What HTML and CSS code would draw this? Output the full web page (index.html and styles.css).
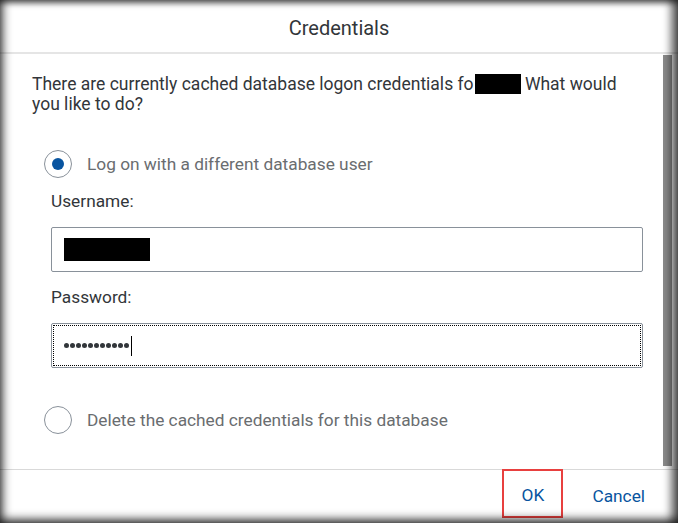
FILE: index.html
```html
<!DOCTYPE html>
<html>
<head>
<meta charset="utf-8">
<link rel="stylesheet" href="styles.css">
</head>
<body>
<div class="frame">
  <div class="header">Credentials</div>
  <div class="main">
    <div class="content">
      <p class="intro">There are currently cached database logon credentials fo<span class="redact-inline"></span> What would you like to do?</p>
      <div class="radio-row">
        <span class="radio checked"><span class="dot"></span></span>
        <span class="radio-label">Log on with a different database user</span>
      </div>
      <div class="fields">
        <div class="field-label">Username:</div>
        <div class="input"><span class="redact-user"></span></div>
        <div class="field-label">Password:</div>
        <div class="input focused">
          <span class="pw"><i></i><i></i><i></i><i></i><i></i><i></i><i></i><i></i><i></i><i></i><i></i></span><span class="caret"></span>
        </div>
      </div>
      <div class="radio-row second">
        <span class="radio"></span>
        <span class="radio-label">Delete the cached credentials for this database</span>
      </div>
    </div>
    <div class="scrollbar"></div>
  </div>
  <div class="footer">
    <button class="btn ok">OK</button>
    <button class="btn">Cancel</button>
  </div>
  <div class="shade"></div>
</div>
</body>
</html>
```

FILE: styles.css
```css
html, body {
  margin: 0;
  padding: 0;
  background: #fff;
}
body {
  font-family: "Roboto", "Liberation Sans", sans-serif;
  color: #32363a;
}
.frame {
  position: relative;
  width: 678px;
  height: 523px;
  overflow: hidden;
  display: flex;
  flex-direction: column;
  background: #fff;
}
.header {
  border-bottom: 2px solid #e5e5e5;
  display: flex;
  align-items: center;
  justify-content: center;
  font-size: 20px;
  padding-top: 4px;
  box-sizing: border-box;
  height: 54px;
  color: #32363a;
}
.main {
  flex: 1;
  display: flex;
  min-height: 0;
}
.content {
  flex: 1;
  padding: 20px 0 0 32px;
}
.intro {
  margin: 0;
  font-size: 17.5px;
  line-height: 20px;
  width: 600px;
}
.redact-inline {
  display: inline-block;
  width: 46px;
  height: 20px;
  margin-left: 1px;
  background: #000;
  vertical-align: -4px;
}
.radio-row {
  display: flex;
  align-items: center;
  margin: 36px 0 0 12px;
  height: 28px;
}
.radio-row.second {
  margin-top: 38px;
}
.radio {
  width: 26px;
  height: 26px;
  border: 1px solid #89919a;
  border-radius: 50%;
  display: flex;
  align-items: center;
  justify-content: center;
  box-sizing: content-box;
}
.dot {
  width: 12px;
  height: 12px;
  border-radius: 50%;
  background: #0854a0;
}
.radio-label {
  margin-left: 15px;
  font-size: 17.3px;
  color: #6a6d70;
}
.fields {
  margin-left: 19px;
  width: 592px;
  padding-top: 13px;
}
.field-label {
  font-size: 17.3px;
  line-height: 20px;
  margin-bottom: 16px;
}
.input {
  height: 45px;
  border: 1px solid #89919a;
  border-radius: 2px;
  box-sizing: border-box;
  display: flex;
  align-items: center;
  padding-left: 12px;
  margin-bottom: 15px;
}
.input.focused {
  outline: 1px dotted #000;
  outline-offset: -3px;
  margin-bottom: 0;
}
.redact-user {
  width: 86px;
  height: 23px;
  background: #000;
}
.pw {
  display: flex;
  gap: 1px;
}
.pw i {
  display: block;
  width: 5px;
  height: 5px;
  border-radius: 50%;
  background: #32363a;
}
.caret {
  width: 1px;
  height: 20px;
  background: #000;
  margin-left: 2px;
}
.scrollbar {
  width: 9px;
  margin: 1px 6px 3px 0;
  background: #8a8a8a;
}
.footer {
  height: 54px;
  border-top: 1px solid #d9d9d9;
  display: flex;
  justify-content: flex-end;
  align-items: flex-start;
  padding-right: 33px;
  box-sizing: border-box;
}
.btn {
  font-family: "Roboto", "Liberation Sans", sans-serif;
  font-size: 17.3px;
  color: #0854a0;
  background: none;
  border: none;
  padding: 0;
  height: 49px;
  line-height: 52px;
  margin-left: 29px;
  cursor: pointer;
}
.btn.ok {
  width: 61px;
  border: 2px solid #e8403f;
  box-sizing: border-box;
  margin-top: -1px;
  line-height: 49px;
}
.shade {
  position: absolute;
  inset: 0;
  pointer-events: none;
  box-shadow: inset 6px 0 8px -2px rgba(0,0,0,0.55), inset -9px 0 9px -2px rgba(0,0,0,0.6), inset 0 5px 6px -2px rgba(0,0,0,0.5), inset 0 -8px 8px -3px rgba(0,0,0,0.55);
}
```
